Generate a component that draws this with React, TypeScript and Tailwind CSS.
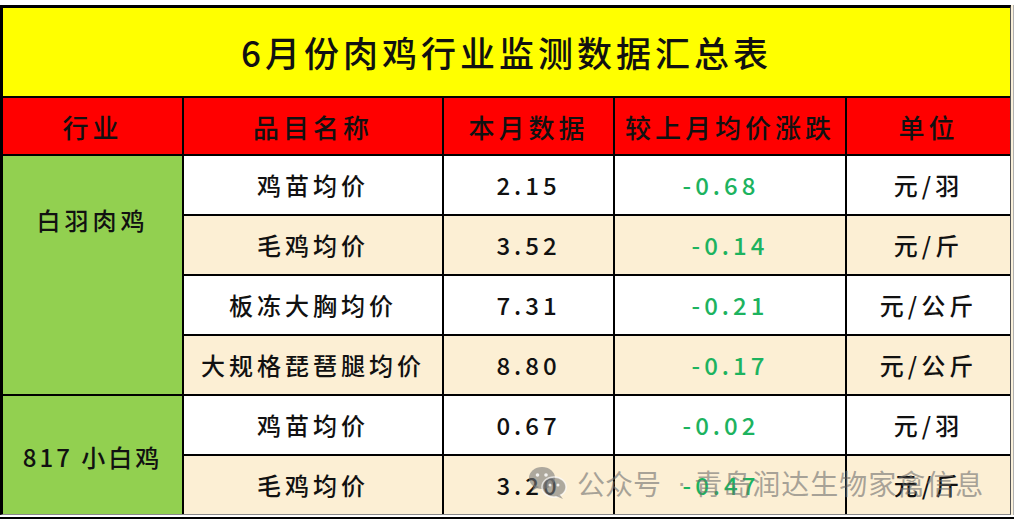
import React from "react";

type Row = {
  name: string;
  value: string;
  change: string;
  unit: string;
  shiftChange?: boolean;
};

const whiteFeather: Row[] = [
  { name: "鸡苗均价", value: "2.15", change: "-0.68", unit: "元/羽", shiftChange: true },
  { name: "毛鸡均价", value: "3.52", change: "-0.14", unit: "元/斤" },
  { name: "板冻大胸均价", value: "7.31", change: "-0.21", unit: "元/公斤" },
  { name: "大规格琵琶腿均价", value: "8.80", change: "-0.17", unit: "元/公斤" },
];

const small817: Row[] = [
  { name: "鸡苗均价", value: "0.67", change: "-0.02", unit: "元/羽", shiftChange: true },
  { name: "毛鸡均价", value: "3.20", change: "-0.47", unit: "元/斤", shiftChange: true },
];

const headers = ["行业", "品目名称", "本月数据", "较上月均价涨跌", "单位"];

function WeChatIcon() {
  return (
    <svg width="40" height="34" viewBox="0 0 40 34">
      <g fill="rgba(120,120,120,0.6)">
        <ellipse cx="14" cy="12" rx="13" ry="11" />
        <path d="M6 19 L4 25 L11 21 Z" />
      </g>
      <ellipse
        cx="26"
        cy="21"
        rx="12"
        ry="10"
        fill="rgba(120,120,120,0.6)"
        stroke="rgba(255,255,255,0.7)"
        strokeWidth="1.5"
      />
      <path d="M32 29 L35 33 L28 30 Z" fill="rgba(120,120,120,0.6)" />
      <circle cx="9.5" cy="9" r="1.8" fill="rgba(255,255,255,0.85)" />
      <circle cx="18" cy="9" r="1.8" fill="rgba(255,255,255,0.85)" />
      <circle cx="22" cy="19" r="1.5" fill="rgba(255,255,255,0.85)" />
      <circle cx="30" cy="19" r="1.5" fill="rgba(255,255,255,0.85)" />
    </svg>
  );
}

function DataCells({ row, index }: { row: Row; index: number }) {
  const bg = index % 2 === 0 ? "bg-white" : "bg-[#fcefd4]";
  const cell = `${bg} flex items-center justify-center text-[24px] font-medium tracking-[4px]`;
  return (
    <>
      <div className={`${cell} text-[#111]`}>{row.name}</div>
      <div className={`${cell} text-[#111]`}>{row.value}</div>
      <div className={`${cell} text-[#1db35f] ${row.shiftChange ? "pr-[18px]" : ""}`}>
        {row.change}
      </div>
      <div className={`${cell} text-[#111]`}>{row.unit}</div>
    </>
  );
}

export default function App() {
  return (
    <div
      className="relative h-[524px] w-[1018px] overflow-hidden bg-white pt-[5px]"
      style={{ fontFamily: '"Noto Sans CJK SC", "Noto Sans", sans-serif' }}
    >
      <div className="w-fit border-r border-[#b0b0b0] bg-[#fbf1da] pr-[2px]">
        <div className="w-fit border-b border-l-[3px] border-r border-t-[3px] border-b-[#8a8a8a] border-l-black border-r-[#555] border-t-black">
          <div className="grid grid-cols-[179px_258px_169px_230px_163px] grid-rows-[88px_56px_repeat(6,58px)] gap-[2px] bg-black">
            <div className="col-span-5 flex items-center justify-center bg-[#ffff00] text-[35px] font-medium tracking-[4px] text-[#111]">
              6月份肉鸡行业监测数据汇总表
            </div>
            {headers.map((h) => (
              <div
                key={h}
                className="flex items-center justify-center bg-[#ff0000] text-[26px] font-medium tracking-[4px] text-[#111]"
              >
                {h}
              </div>
            ))}

            <div className="row-span-4 flex items-start justify-center bg-[#92d050] pt-[46px] text-[24px] font-medium tracking-[4px] text-[#111]">
              白羽肉鸡
            </div>
            {whiteFeather.slice(0, 1).map((r, i) => (
              <DataCells key={r.name + i} row={r} index={i} />
            ))}
            {whiteFeather.slice(1).map((r, i) => (
              <div key={r.name + i} className="col-span-4 grid grid-cols-subgrid">
                <DataCells row={r} index={i + 1} />
              </div>
            ))}

            <div className="row-span-2 flex items-center justify-center bg-[#92d050] pt-[4px] text-[24px] font-medium tracking-[3px] text-[#111]">
              817 小白鸡
            </div>
            <DataCells row={small817[0]} index={0} />
            <div className="col-span-4 grid grid-cols-subgrid">
              <DataCells row={small817[1]} index={1} />
            </div>
          </div>
        </div>
      </div>
      <div className="mt-[2px] h-[2px] w-[1014px] bg-black" />

      <div className="absolute left-[528px] top-[462px] flex items-center text-[28px] text-[rgba(110,110,110,0.6)]">
        <WeChatIcon />
        <span className="ml-[9px]">公众号</span>
        <span className="ml-[16px] mr-[8px] font-['Liberation_Sans',sans-serif]">·</span>
        <span className="tracking-[1px]">青岛润达生物家禽信息</span>
      </div>
    </div>
  );
}
